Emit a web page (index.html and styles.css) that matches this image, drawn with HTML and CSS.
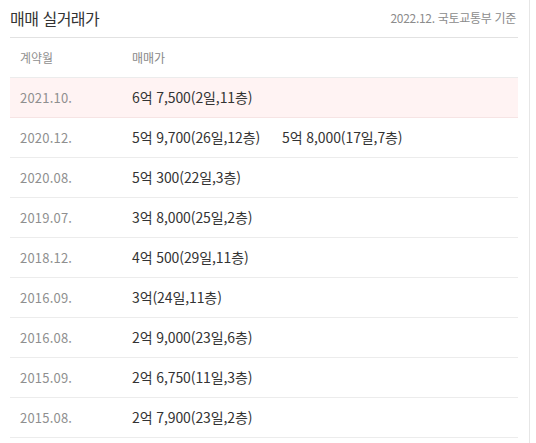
FILE: index.html
```html
<!DOCTYPE html>
<html lang="ko">
<head>
    <meta charset="UTF-8">
    <meta name="viewport" content="width=device-width, initial-scale=1.0">
    <title>매매 실거래가</title>
    <link rel="stylesheet" href="styles.css">
</head>
<body>
    <div class="page">
        <div class="trade-box">
            <div class="trade-head">
                <h2>매매 실거래가</h2>
                <span class="source">2022.12. 국토교통부 기준</span>
            </div>

            <table class="trade-table">
                <thead>
                    <tr>
                        <th class="col-month">계약월</th>
                        <th>매매가</th>
                    </tr>
                </thead>
                <tbody>
                    <tr class="latest">
                        <td class="col-month">2021.10.</td>
                        <td><span class="deal">6억 7,500(2일,11층)</span></td>
                    </tr>
                    <tr>
                        <td class="col-month">2020.12.</td>
                        <td><span class="deal">5억 9,700(26일,12층)</span><span class="deal">5억 8,000(17일,7층)</span></td>
                    </tr>
                    <tr>
                        <td class="col-month">2020.08.</td>
                        <td><span class="deal">5억 300(22일,3층)</span></td>
                    </tr>
                    <tr>
                        <td class="col-month">2019.07.</td>
                        <td><span class="deal">3억 8,000(25일,2층)</span></td>
                    </tr>
                    <tr>
                        <td class="col-month">2018.12.</td>
                        <td><span class="deal">4억 500(29일,11층)</span></td>
                    </tr>
                    <tr>
                        <td class="col-month">2016.09.</td>
                        <td><span class="deal">3억(24일,11층)</span></td>
                    </tr>
                    <tr>
                        <td class="col-month">2016.08.</td>
                        <td><span class="deal">2억 9,000(23일,6층)</span></td>
                    </tr>
                    <tr>
                        <td class="col-month">2015.09.</td>
                        <td><span class="deal">2억 6,750(11일,3층)</span></td>
                    </tr>
                    <tr>
                        <td class="col-month">2015.08.</td>
                        <td><span class="deal">2억 7,900(23일,2층)</span></td>
                    </tr>
                </tbody>
            </table>
        </div>
    </div>
</body>
</html>
```

FILE: styles.css
```css
* {
    margin: 0;
    padding: 0;
    box-sizing: border-box;
}

body {
    font-family: "Noto Sans CJK KR", "Noto Sans", sans-serif;
    background: #fff;
    color: #333;
}

.page {
    width: 530px;
    min-height: 443px;
    border-right: 1px solid #e6e6e6;
    padding: 0 11px 0 10px;
}

.trade-head {
    display: flex;
    justify-content: space-between;
    align-items: center;
    height: 38px;
    padding-bottom: 2px;
    border-bottom: 1px solid #e2e2e2;
}

.trade-head h2 {
    font-size: 16px;
    font-weight: 400;
    color: #333;
    letter-spacing: -0.5px;
}

.source {
    font-size: 12px;
    color: #8c8c8c;
    padding-right: 2px;
    letter-spacing: -0.3px;
}

.trade-table {
    width: 100%;
    border-collapse: collapse;
}

.trade-table th,
.trade-table td {
    height: 40px;
    text-align: left;
    font-weight: 400;
    border-bottom: 1px solid #ececec;
    white-space: nowrap;
}

.trade-table th {
    height: 39px;
    font-size: 12px;
    color: #888;
}

.trade-table td {
    font-size: 14px;
    color: #333;
}

.trade-table .col-month {
    width: 122px;
    padding-left: 10px;
    font-size: 13px;
    color: #8f8f8f;
    letter-spacing: 0.2px;
}

.trade-table th.col-month {
    font-size: 12px;
    letter-spacing: 0;
}

.trade-table tr.latest td {
    background: #fff3f3;
    border-bottom-color: #f6e4e4;
}

.deal {
    margin-right: 22px;
    letter-spacing: -0.1px;
}
```
